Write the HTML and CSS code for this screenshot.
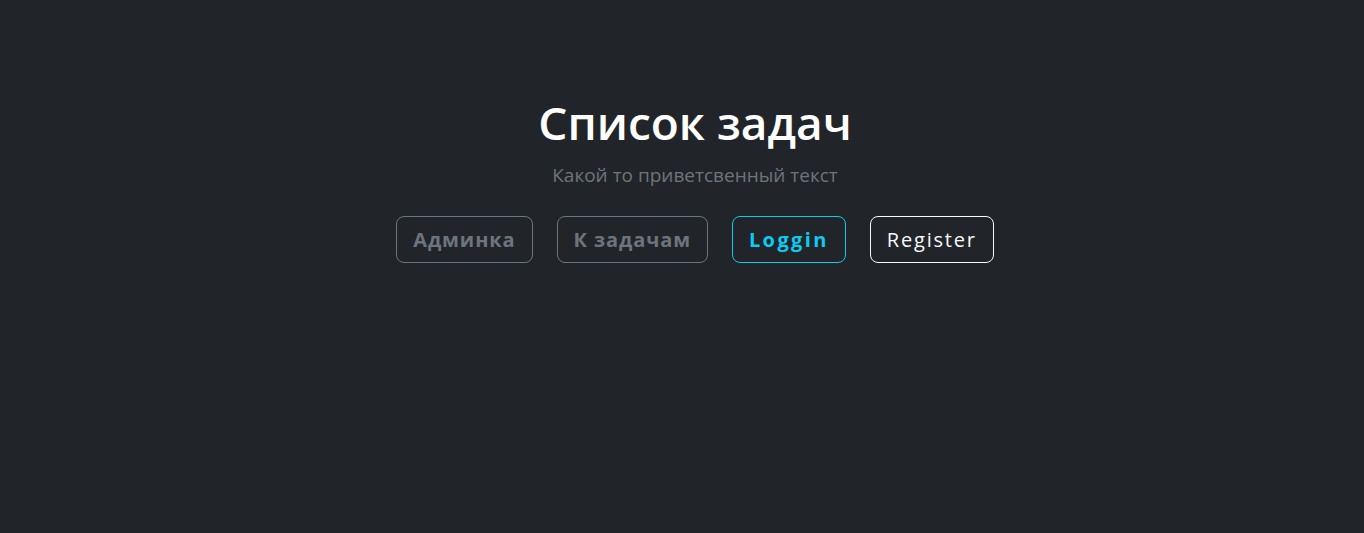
FILE: index.html
```html
<!DOCTYPE html>
<html lang="ru">
<head>
<meta charset="utf-8">
<title>Список задач</title>
<link rel="stylesheet" href="styles.css">
</head>
<body>
<main class="hero">
  <h1 class="hero-title">Список задач</h1>
  <p class="hero-lead">Какой то приветсвенный текст</p>
  <div class="hero-actions">
    <a class="btn btn-secondary bold" href="#">Админка</a>
    <a class="btn btn-secondary bold" href="#">К задачам</a>
    <a class="btn btn-info bold latin" href="#">Loggin</a>
    <a class="btn btn-light latin" href="#">Register</a>
  </div>
</main>
</body>
</html>
```
FILE: styles.css
```css
html, body {
  margin: 0;
  padding: 0;
  height: 100%;
}
body {
  background: #212529;
  color: #dee2e6;
  font-family: "Open Sans", "Noto Sans", sans-serif;
}
.hero {
  padding: 94px 24px 0 50px;
  text-align: center;
}
.hero-title {
  margin: 0 0 8px;
  font-size: 46px;
  line-height: 57.6px;
  font-weight: 600;
  color: #fff;
}
.hero-lead {
  margin: 0 0 26px;
  font-size: 19px;
  line-height: 30px;
  color: #6c757d;
}
.hero-actions {
  display: flex;
  justify-content: center;
  gap: 24px;
}
.btn {
  display: inline-block;
  padding: 8px 16px;
  font-size: 20px;
  line-height: 29px;
  letter-spacing: 0.9px;
  border: 1px solid;
  border-radius: 8px;
  text-decoration: none;
}
.btn.bold.latin { letter-spacing: 2.4px; }
.btn.latin { letter-spacing: 1.8px; }
.bold { font-weight: 700; }
.btn-secondary { color: #6c757d; border-color: #6c757d; }
.btn-info { color: #0dcaf0; border-color: #0dcaf0; }
.btn-light { color: #f8f9fa; border-color: #f8f9fa; }
```
